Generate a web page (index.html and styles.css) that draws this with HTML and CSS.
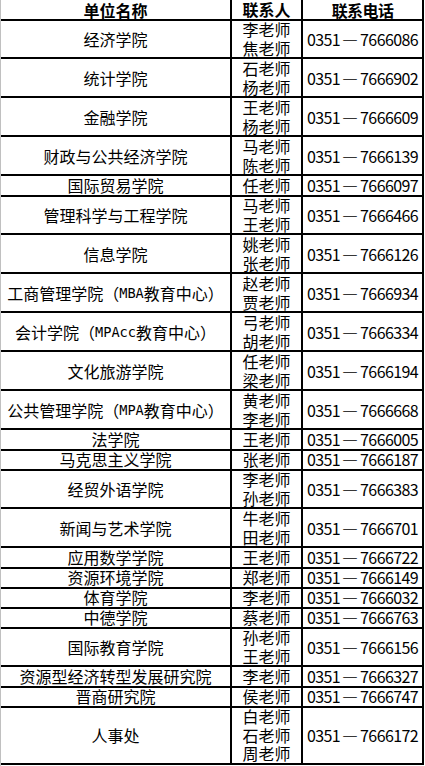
FILE: index.html
```html
<!DOCTYPE html>
<html lang="zh-CN">
<head>
<meta charset="utf-8">
<title>联系方式</title>
<link rel="stylesheet" href="styles.css">
</head>
<body>
<div class="sheet">
  <div class="row h1 head"><div class="c unit">单位名称</div><div class="c name">联系人</div><div class="c tel">联系电话</div></div>
  <div class="row h2"><div class="c unit">经济学院</div><div class="c name">李老师<br>焦老师</div><div class="c tel">0351<span class="dash">—</span>7666086</div></div>
  <div class="row h2"><div class="c unit">统计学院</div><div class="c name">石老师<br>杨老师</div><div class="c tel">0351<span class="dash">—</span>7666902</div></div>
  <div class="row h2"><div class="c unit">金融学院</div><div class="c name">王老师<br>杨老师</div><div class="c tel">0351<span class="dash">—</span>7666609</div></div>
  <div class="row h2"><div class="c unit">财政与公共经济学院</div><div class="c name">马老师<br>陈老师</div><div class="c tel">0351<span class="dash">—</span>7666139</div></div>
  <div class="row h1"><div class="c unit">国际贸易学院</div><div class="c name">任老师</div><div class="c tel">0351<span class="dash">—</span>7666097</div></div>
  <div class="row h2"><div class="c unit">管理科学与工程学院</div><div class="c name">马老师<br>王老师</div><div class="c tel">0351<span class="dash">—</span>7666466</div></div>
  <div class="row h2"><div class="c unit">信息学院</div><div class="c name">姚老师<br>张老师</div><div class="c tel">0351<span class="dash">—</span>7666126</div></div>
  <div class="row h2"><div class="c unit">工商管理学院（<span class="lat">MBA</span>教育中心）</div><div class="c name">赵老师<br>贾老师</div><div class="c tel">0351<span class="dash">—</span>7666934</div></div>
  <div class="row h2"><div class="c unit">会计学院（<span class="lat">MPAcc</span>教育中心）</div><div class="c name">弓老师<br>胡老师</div><div class="c tel">0351<span class="dash">—</span>7666334</div></div>
  <div class="row h2"><div class="c unit">文化旅游学院</div><div class="c name">任老师<br>梁老师</div><div class="c tel">0351<span class="dash">—</span>7666194</div></div>
  <div class="row h2"><div class="c unit">公共管理学院（<span class="lat">MPA</span>教育中心）</div><div class="c name">黄老师<br>李老师</div><div class="c tel">0351<span class="dash">—</span>7666668</div></div>
  <div class="row h1"><div class="c unit">法学院</div><div class="c name">王老师</div><div class="c tel">0351<span class="dash">—</span>7666005</div></div>
  <div class="row h1"><div class="c unit">马克思主义学院</div><div class="c name">张老师</div><div class="c tel">0351<span class="dash">—</span>7666187</div></div>
  <div class="row h2"><div class="c unit">经贸外语学院</div><div class="c name">李老师<br>孙老师</div><div class="c tel">0351<span class="dash">—</span>7666383</div></div>
  <div class="row h2"><div class="c unit">新闻与艺术学院</div><div class="c name">牛老师<br>田老师</div><div class="c tel">0351<span class="dash">—</span>7666701</div></div>
  <div class="row h1"><div class="c unit">应用数学学院</div><div class="c name">王老师</div><div class="c tel">0351<span class="dash">—</span>7666722</div></div>
  <div class="row h1"><div class="c unit">资源环境学院</div><div class="c name">郑老师</div><div class="c tel">0351<span class="dash">—</span>7666149</div></div>
  <div class="row h1"><div class="c unit">体育学院</div><div class="c name">李老师</div><div class="c tel">0351<span class="dash">—</span>7666032</div></div>
  <div class="row h1"><div class="c unit">中德学院</div><div class="c name">蔡老师</div><div class="c tel">0351<span class="dash">—</span>7666763</div></div>
  <div class="row h2"><div class="c unit">国际教育学院</div><div class="c name">孙老师<br>王老师</div><div class="c tel">0351<span class="dash">—</span>7666156</div></div>
  <div class="row h1"><div class="c unit">资源型经济转型发展研究院</div><div class="c name">李老师</div><div class="c tel">0351<span class="dash">—</span>7666327</div></div>
  <div class="row h1"><div class="c unit">晋商研究院</div><div class="c name">侯老师</div><div class="c tel">0351<span class="dash">—</span>7666747</div></div>
  <div class="row h3"><div class="c unit">人事处</div><div class="c name">白老师<br>石老师<br>周老师</div><div class="c tel">0351<span class="dash">—</span>7666172</div></div>
</div>
</body>
</html>
```

FILE: styles.css
```css
html, body {
  margin: 0;
  padding: 0;
  background: #fff;
}
body {
  font-family: "Noto Sans CJK SC", "Noto Sans", sans-serif;
  font-size: 16px;
  color: #000;
}
.sheet {
  border-left: 1px solid #c0c0c0;
  min-height: 766px;
  box-sizing: border-box;
  width: 425px;
}
.row {
  display: grid;
  grid-template-columns: 231px 71px 121px;
}
.row.h1 { height: 20px; }
.row.h2 { height: 39px; }
.row.h3 { height: 58px; }
.c {
  box-sizing: border-box;
  border-right: 2px solid #000;
  border-bottom: 2px solid #000;
  display: flex;
  align-items: center;
  justify-content: center;
  text-align: center;
  white-space: nowrap;
  line-height: 18px;
}
.name {
  line-height: 18.5px;
}
.tel {
  letter-spacing: -0.6px;
}
.dash {
  font-feature-settings: "fwid" 1;
  letter-spacing: 0;
  margin: 0 2px;
}
.head .c {
  font-weight: bold;
  align-items: flex-end;
}
.lat {
  font-family: "DejaVu Sans Mono", monospace;
  font-size: 13.6px;
}
```
